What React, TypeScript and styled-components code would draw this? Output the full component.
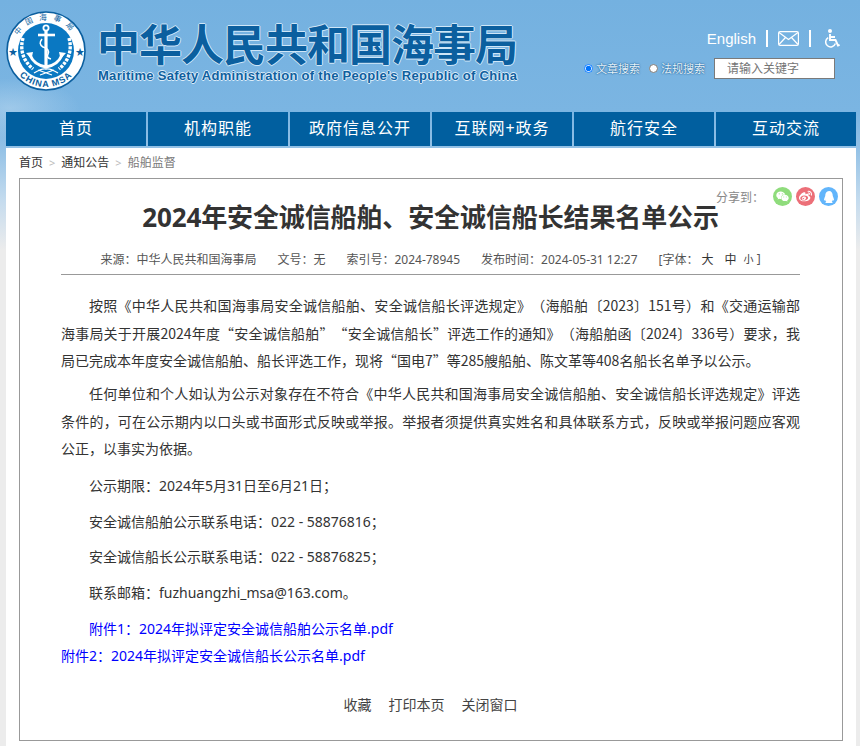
import React from "react"
import styled, { createGlobalStyle } from "styled-components"
import { FaWeixin, FaWeibo, FaQq } from "react-icons/fa"

const bodyFont = `"Noto Sans", "Noto Sans CJK SC", Arial, sans-serif`

const GlobalStyle = createGlobalStyle`
  html, body {
    margin: 0;
    padding: 0;
    height: 746px;
    overflow: hidden;
    background: #eeeeee;
  }
  body {
    font-family: ${bodyFont};
  }
`

const Page = styled.div`
  width: 860px;
  height: 746px;
  overflow: hidden;
  background:
    radial-gradient(ellipse 70px 30px at 10px 108px, rgba(225, 238, 248, 0.35), transparent),
    linear-gradient(#74b1e0 0, #7bb5e2 112px, #93c1e6 148px, #c4dbee 200px, #ececec 250px);
`

const Header = styled.header`
  height: 112px;
  padding: 0 20px 0 6px;
  display: flex;
  justify-content: space-between;
`

const Brand = styled.div`
  display: flex;
  align-items: flex-start;
  padding-top: 11px;
  gap: 13px;
`

const BrandText = styled.div`
  display: flex;
  flex-direction: column;
`

const BrandTitle = styled.div`
  font-family: "Noto Sans CJK SC", sans-serif;
  font-weight: 700;
  font-size: 43px;
  line-height: 50px;
  height: 50px;
  margin: 6px 0 0 -2px;
  letter-spacing: -1px;
  color: #0b5f9f;
  text-shadow: 1px 0 0 #cfe6f7, -1px 0 0 #cfe6f7, 0 1px 0 #cfe6f7, 0 -1px 0 #cfe6f7;
  white-space: nowrap;
`

const BrandSub = styled.div`
  font-family: "Liberation Sans", sans-serif;
  font-size: 13px;
  font-weight: 700;
  line-height: 14px;
  margin: 2px 0 0 -1px;
  letter-spacing: 0.29px;
  color: #0f609f;
  text-shadow: 1px 0 0 #dcecf8, -1px 0 0 #dcecf8, 0 1px 0 #dcecf8, 0 -1px 0 #dcecf8;
  white-space: nowrap;
`

const Tools = styled.div`
  display: flex;
  flex-direction: column;
  align-items: flex-end;
  padding-top: 27px;
`

const TopLinks = styled.div`
  display: flex;
  align-items: center;
  height: 22px;
  color: #fff;
  font-family: "Liberation Sans", sans-serif;
  font-size: 15px;
`

const Divider = styled.span`
  width: 2px;
  height: 17px;
  background: #fff;
  margin: 0 10px;
`

const AccessLink = styled.a`
  display: flex;
  margin-left: 4px;
  color: #fff;
`

const SearchRow = styled.div`
  display: flex;
  align-items: center;
  margin: 9px 5px 0 0;
`

const RadioLabel = styled.label`
  display: flex;
  align-items: center;
  gap: 3px;
  margin-right: 9px;
  font-size: 11px;
  line-height: 14px;
  color: #e8f3fb;
  text-shadow: 0 0 2px #1b5f96, 0 0 1px #1b5f96;
  white-space: nowrap;
`

const Radio = styled.input`
  width: 9px;
  height: 9px;
  margin: 0;
`

const SearchInput = styled.input`
  width: 121px;
  height: 21px;
  box-sizing: border-box;
  border: 1px solid #7a7a7a;
  border-radius: 0;
  background: #fff;
  font-family: ${bodyFont};
  font-size: 12px;
  padding: 0 0 0 12px;
  outline: none;
`

const Nav = styled.nav`
  margin-left: 6px;
  width: 850px;
  height: 34px;
  display: grid;
  grid-template-columns: repeat(6, 140px);
  column-gap: 2px;
`

const NavItem = styled.a`
  background: #015f9f;
  color: #fff;
  font-size: 16px;
  line-height: 33px;
  text-align: center;
  letter-spacing: 1px;
`

const Main = styled.main`
  margin: 2px 4px 0 6px;
  height: 610px;
  background: #fff;
  padding: 0 13px;
`

const Crumbs = styled.div`
  height: 30px;
  box-sizing: border-box;
  padding-bottom: 2px;
  display: flex;
  align-items: center;
  font-size: 12px;
  color: #333;
`

const CrumbSep = styled.span`
  color: #bbb;
  font-size: 11px;
  margin: 0 6px;
`

const CrumbCurrent = styled.span`
  color: #7a7a7a;
`

const Article = styled.article`
  position: relative;
  height: 563px;
  box-sizing: border-box;
  border: 1px solid #999;
  padding: 0 42px 0 41px;
`

const Share = styled.div`
  position: absolute;
  top: 8px;
  right: 4px;
  display: flex;
  align-items: center;
  gap: 4px;
  font-size: 12px;
  color: #888;
`

const ShareLabel = styled.span`
  margin-right: 5px;
`

const ShareIcon = styled.a<{ $bg: string }>`
  width: 19px;
  height: 19px;
  border-radius: 50%;
  background: ${(p) => p.$bg};
  color: #fff;
  display: flex;
  align-items: center;
  justify-content: center;
`

const Title = styled.h1`
  margin: 0;
  padding-top: 20px;
  font-size: 26px;
  line-height: 36px;
  font-weight: 700;
  letter-spacing: -0.12px;
  text-align: center;
  color: #333;
`

const Meta = styled.div`
  display: flex;
  justify-content: center;
  align-items: center;
  height: 40px;
  box-sizing: border-box;
  border-bottom: 1px solid #999;
  padding-top: 8px;
  font-size: 12px;
  color: #555;
  white-space: pre;
`

const MetaItem = styled.span`
  margin-right: 21px;
`

const SizeOption = styled.span<{ $size: number; $gap: number }>`
  margin-left: ${(p) => p.$gap}px;
  font-size: ${(p) => p.$size}px;
  color: #333;
`

const Body = styled.div`
  padding-top: 17px;
  font-size: 14px;
  line-height: 27.5px;
  color: #333;
  text-spacing-trim: space-all;
`

// $cjk: the CJK face comes first so the curly quotes stay full width
const Para = styled.p<{ $gap?: number; $cjk?: boolean }>`
  margin: 0 0 ${(p) => p.$gap ?? 8}px;
  text-indent: 28px;
  text-align: justify;
  ${(p) => (p.$cjk ? `font-family: "Noto Sans CJK SC", sans-serif;` : "")}
`

const Attachments = styled.div`
  margin-top: 9px;
`

const Attachment = styled.a<{ $indent?: boolean }>`
  display: block;
  color: #0000ff;
  text-indent: ${(p) => (p.$indent ? "28px" : "0")};
  line-height: 27px;
`

const Actions = styled.div`
  margin-top: 25px;
  display: flex;
  justify-content: center;
  gap: 17px;
  font-size: 14px;
  color: #444;
`

const navItems = ["首页", "机构职能", "政府信息公开", "互联网+政务", "航行安全", "互动交流"]

function Emblem() {
  return (
    <svg width="80" height="80" viewBox="0 0 80 80">
      <circle cx="40" cy="40" r="39" fill="#fff" stroke="#0b5f9f" strokeWidth="1.6" />
      <circle cx="40" cy="40" r="28" fill="#0a78c2" />
      {/* wreath */}
      <path d="M17 27 Q12 45 27 58 M63 27 Q68 45 53 58" fill="none" stroke="#fff" strokeWidth="3.4" strokeDasharray="3 1.2" />
      {/* anchor */}
      <g fill="none" stroke="#fff">
        <circle cx="40" cy="17" r="2.6" strokeWidth="1.8" />
        <path d="M32 24 H49" strokeWidth="2.6" />
        <path d="M40 20 V55" strokeWidth="3.2" />
        <path d="M36 28 Q32 33 37 36 Q44 38 42 43 Q40 47 45 48" strokeWidth="1.6" />
        <path d="M24 44 Q28 54 40 56 Q52 54 56 44" strokeWidth="3" />
      </g>
      <path d="M20 42 l7 -1 l-1.5 7z M60 42 l-7 -1 l1.5 7z" fill="#fff" />
      <path d="M28 62 Q36 57 40 58 Q44 57 52 62 M32 59 L46 64 M48 59 L34 64" fill="none" stroke="#fff" strokeWidth="1.3" />
      <text x="2.5" y="44" fontSize="9" fill="#0b5f9f">★</text>
      <text x="69.5" y="44" fontSize="9" fill="#0b5f9f">★</text>
      <path id="emblemTop" d="M8.5 40 A31.5 31.5 0 0 1 71.5 40" fill="none" />
      <text fontSize="7.5" fill="#0b5f9f" fontFamily="Noto Sans CJK SC">
        <textPath href="#emblemTop" startOffset="50%" textAnchor="middle" letterSpacing="6">中国海事局</textPath>
      </text>
      <path id="emblemBottom" d="M4 40 A36 36 0 0 0 76 40" fill="none" />
      <text fontSize="9" fontWeight="700" fill="#0b5f9f" fontFamily="Liberation Sans">
        <textPath href="#emblemBottom" startOffset="50%" textAnchor="middle" letterSpacing="1">CHINA MSA</textPath>
      </text>
    </svg>
  )
}

function MailIcon() {
  return (
    <svg width="21" height="15" viewBox="0 0 21 15" fill="none" stroke="#fff" strokeWidth="1.2">
      <rect x="0.6" y="0.6" width="19.8" height="13.8" rx="1.5" />
      <path d="M1 1.5 L10.5 8.5 L20 1.5 M1 13.5 L7.5 6.5 M20 13.5 L13.5 6.5" />
    </svg>
  )
}

function AccessIcon() {
  return (
    <svg width="15" height="19" viewBox="0 0 15 19" fill="none" stroke="#fff">
      <circle cx="5" cy="2" r="2" fill="#fff" stroke="none" />
      <path d="M5 5 V11 H10.5 L13 16.5 L14.6 15.8 M5 8 H10" strokeWidth="1.9" />
      <path d="M3.2 8.6 A5 5 0 1 0 10.4 14.6" strokeWidth="1.5" />
    </svg>
  )
}

export default function App() {
  return (
    <Page>
      <GlobalStyle />
      <Header>
        <Brand>
          <Emblem />
          <BrandText>
            <BrandTitle>中华人民共和国海事局</BrandTitle>
            <BrandSub>Maritime Safety Administration of the People's Republic of China</BrandSub>
          </BrandText>
        </Brand>
        <Tools>
          <TopLinks>
            <span>English</span>
            <Divider />
            <MailIcon />
            <Divider />
            <AccessLink>
              <AccessIcon />
            </AccessLink>
          </TopLinks>
          <SearchRow>
            <RadioLabel>
              <Radio type="radio" name="scope" defaultChecked />
              文章搜索
            </RadioLabel>
            <RadioLabel>
              <Radio type="radio" name="scope" />
              法规搜索
            </RadioLabel>
            <SearchInput placeholder="请输入关键字" />
          </SearchRow>
        </Tools>
      </Header>
      <Nav>
        {navItems.map((item) => (
          <NavItem key={item}>{item}</NavItem>
        ))}
      </Nav>
      <Main>
        <Crumbs>
          <span>首页</span>
          <CrumbSep>&gt;</CrumbSep>
          <span>通知公告</span>
          <CrumbSep>&gt;</CrumbSep>
          <CrumbCurrent>船舶监督</CrumbCurrent>
        </Crumbs>
        <Article>
          <Share>
            <ShareLabel>分享到：</ShareLabel>
            <ShareIcon $bg="#8fdc7c">
              <FaWeixin size={13} />
            </ShareIcon>
            <ShareIcon $bg="#ec6f78">
              <FaWeibo size={13} />
            </ShareIcon>
            <ShareIcon $bg="#62b5fb">
              <FaQq size={12} />
            </ShareIcon>
          </Share>
          <Title>2024年安全诚信船舶、安全诚信船长结果名单公示</Title>
          <Meta>
            <MetaItem>来源：中华人民共和国海事局</MetaItem>
            <MetaItem>文号：无</MetaItem>
            <MetaItem>索引号：2024-78945</MetaItem>
            <MetaItem>发布时间：2024-05-31 12:27</MetaItem>
            <span>[字体：</span>
            <SizeOption $size={12} $gap={3}>大</SizeOption>
            <SizeOption $size={12} $gap={11}>中</SizeOption>
            <SizeOption $size={10} $gap={7}>小</SizeOption>
            <span> ]</span>
          </Meta>
          <Body>
            <Para $gap={5.5} $cjk>
              按照《中华人民共和国海事局安全诚信船舶、安全诚信船长评选规定》（海船舶〔2023〕151号）和《交通运输部海事局关于开展2024年度“安全诚信船舶”“安全诚信船长”评选工作的通知》（海船舶函〔2024〕336号）要求，我局已完成本年度安全诚信船舶、船长评选工作，现将“国电7”等285艘船舶、陈文革等408名船长名单予以公示。
            </Para>
            <Para $gap={9.5}>
              任何单位和个人如认为公示对象存在不符合《中华人民共和国海事局安全诚信船舶、安全诚信船长评选规定》评选条件的，可在公示期内以口头或书面形式反映或举报。举报者须提供真实姓名和具体联系方式，反映或举报问题应客观公正，以事实为依据。
            </Para>
            <Para>公示期限：2024年5月31日至6月21日；</Para>
            <Para>安全诚信船舶公示联系电话：022 - 58876816；</Para>
            <Para>安全诚信船长公示联系电话：022 - 58876825；</Para>
            <Para $gap={0}>联系邮箱：fuzhuangzhi_msa@163.com。</Para>
            <Attachments>
              <Attachment $indent>附件1：2024年拟评定安全诚信船舶公示名单.pdf</Attachment>
              <Attachment>附件2：2024年拟评定安全诚信船长公示名单.pdf</Attachment>
            </Attachments>
          </Body>
          <Actions>
            <span>收藏</span>
            <span>打印本页</span>
            <span>关闭窗口</span>
          </Actions>
        </Article>
      </Main>
    </Page>
  )
}
